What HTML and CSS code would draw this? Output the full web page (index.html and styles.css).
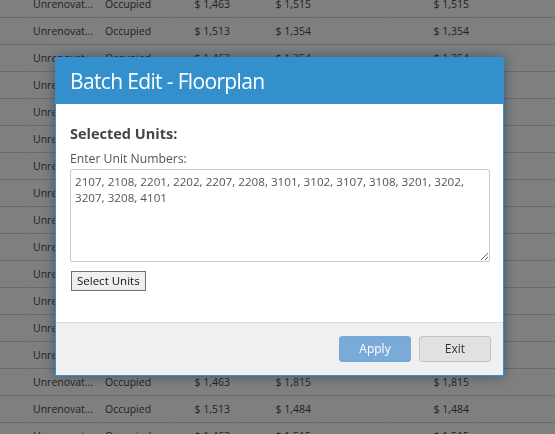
FILE: index.html
```html
<!DOCTYPE html>
<html>
<head>
<meta charset="utf-8">
<link rel="stylesheet" href="styles.css">
</head>
<body>
<div class="page">
  <table class="grid">
    <colgroup>
      <col class="w1"><col class="w2"><col class="w3"><col class="w4"><col class="w5"><col class="w6"><col class="w7"><col class="w8">
    </colgroup>
    <tbody>
      <tr><td></td><td class="name">Unrenovat...</td><td class="st">Occupied</td><td class="num">$ 1,463</td><td class="num">$ 1,515</td><td></td><td class="num">$ 1,515</td><td></td></tr>
      <tr><td></td><td class="name">Unrenovat...</td><td class="st">Occupied</td><td class="num">$ 1,513</td><td class="num">$ 1,354</td><td></td><td class="num">$ 1,354</td><td></td></tr>
      <tr><td></td><td class="name">Unrenovat...</td><td class="st">Occupied</td><td class="num">$ 1,463</td><td class="num">$ 1,354</td><td></td><td class="num">$ 1,354</td><td></td></tr>
      <tr><td></td><td class="name">Unrenovat...</td><td class="st">Occupied</td><td class="num">$ 1,513</td><td class="num">$ 1,515</td><td></td><td class="num">$ 1,515</td><td></td></tr>
      <tr><td></td><td class="name">Unrenovat...</td><td class="st">Occupied</td><td class="num">$ 1,463</td><td class="num">$ 1,484</td><td></td><td class="num">$ 1,484</td><td></td></tr>
      <tr><td></td><td class="name">Unrenovat...</td><td class="st">Occupied</td><td class="num">$ 1,513</td><td class="num">$ 1,815</td><td></td><td class="num">$ 1,815</td><td></td></tr>
      <tr><td></td><td class="name">Unrenovat...</td><td class="st">Occupied</td><td class="num">$ 1,463</td><td class="num">$ 1,354</td><td></td><td class="num">$ 1,354</td><td></td></tr>
      <tr><td></td><td class="name">Unrenovat...</td><td class="st">Occupied</td><td class="num">$ 1,513</td><td class="num">$ 1,515</td><td></td><td class="num">$ 1,515</td><td></td></tr>
      <tr><td></td><td class="name">Unrenovat...</td><td class="st">Occupied</td><td class="num">$ 1,463</td><td class="num">$ 1,484</td><td></td><td class="num">$ 1,484</td><td></td></tr>
      <tr><td></td><td class="name">Unrenovat...</td><td class="st">Occupied</td><td class="num">$ 1,513</td><td class="num">$ 1,815</td><td></td><td class="num">$ 1,815</td><td></td></tr>
      <tr><td></td><td class="name">Unrenovat...</td><td class="st">Occupied</td><td class="num">$ 1,463</td><td class="num">$ 1,354</td><td></td><td class="num">$ 1,354</td><td></td></tr>
      <tr><td></td><td class="name">Unrenovat...</td><td class="st">Occupied</td><td class="num">$ 1,513</td><td class="num">$ 1,515</td><td></td><td class="num">$ 1,515</td><td></td></tr>
      <tr><td></td><td class="name">Unrenovat...</td><td class="st">Occupied</td><td class="num">$ 1,463</td><td class="num">$ 1,484</td><td></td><td class="num">$ 1,484</td><td></td></tr>
      <tr><td></td><td class="name">Unrenovat...</td><td class="st">Occupied</td><td class="num">$ 1,513</td><td class="num">$ 1,354</td><td></td><td class="num">$ 1,354</td><td></td></tr>
      <tr><td></td><td class="name">Unrenovat...</td><td class="st">Occupied</td><td class="num">$ 1,463</td><td class="num">$ 1,815</td><td></td><td class="num">$ 1,815</td><td></td></tr>
      <tr><td></td><td class="name">Unrenovat...</td><td class="st">Occupied</td><td class="num">$ 1,513</td><td class="num">$ 1,484</td><td></td><td class="num">$ 1,484</td><td></td></tr>
      <tr><td></td><td class="name">Unrenovat...</td><td class="st">Occupied</td><td class="num">$ 1,463</td><td class="num">$ 1,515</td><td></td><td class="num">$ 1,515</td><td></td></tr>
    </tbody>
  </table>
</div>
<div class="backdrop"></div>
<div class="modal">
  <div class="modal-header">
    <h1 class="modal-title">Batch Edit - Floorplan</h1>
  </div>
  <div class="modal-body">
    <h2 class="section-title">Selected Units:</h2>
    <label class="field-label" for="units">Enter Unit Numbers:</label>
    <textarea id="units" class="units-input">2107, 2108, 2201, 2202, 2207, 2208, 3101, 3102, 3107, 3108, 3201, 3202, 3207, 3208, 4101</textarea>
    <button class="select-btn" type="button">Select Units</button>
  </div>
  <div class="modal-footer">
    <button class="btn btn-primary" type="button">Apply</button>
    <button class="btn btn-default" type="button">Exit</button>
  </div>
</div>
</body>
</html>
```

FILE: styles.css
```css
html, body {
  margin: 0;
  padding: 0;
  background: #ffffff;
  overflow: hidden;
  font-family: "Open Sans", "Liberation Sans", sans-serif;
}

.page {
  width: 555px;
  height: 434px;
  overflow: hidden;
}

.grid {
  table-layout: fixed;
  width: 563px;
  border-collapse: separate;
  border-spacing: 1px 0;
  margin: -9px 0 0 -1px;
  font-size: 10.5px;
  color: #444444;
}

.w1 { width: 26px; }
.w2 { width: 73px; }
.w3 { width: 71px; }
.w4 { width: 63px; }
.w5 { width: 80px; }
.w6 { width: 70px; }
.w7 { width: 86px; }
.w8 { width: 85px; }

.grid td {
  height: 26px;
  padding: 0;
  border-bottom: 1px solid #d4d4d4;
  white-space: nowrap;
  overflow: hidden;
  vertical-align: middle;
}

.grid td.name { padding-left: 6px; }
.grid td.st { padding-left: 4px; }
.grid td.num { text-align: right; padding-right: 6px; }

.backdrop {
  position: fixed;
  inset: 0;
  background: rgba(0, 0, 0, 0.5);
}

.modal {
  position: fixed;
  left: 55px;
  top: 57px;
  width: 449px;
  box-sizing: border-box;
  border: 1px solid #3a8fc8;
  background: #ffffff;
  box-shadow: 0 0 12px rgba(10, 50, 90, 0.55);
}

.modal-header {
  height: 47px;
  margin-top: -1px;
  padding: 0 14px;
  background: #3390cc;
  box-sizing: border-box;
}

.modal-title {
  margin: 0;
  padding-top: 2px;
  font-size: 21px;
  font-weight: 400;
  line-height: 44px;
  letter-spacing: -0.65px;
  color: #ffffff;
}

.modal-body {
  display: flex;
  flex-direction: column;
  align-items: flex-start;
  padding: 20px 13px 31px 14px;
}

.section-title {
  margin: 0;
  font-size: 14.5px;
  font-weight: 700;
  line-height: 20px;
  color: #444444;
}

.field-label {
  margin-top: 7px;
  font-size: 12.2px;
  line-height: 16px;
  color: #555555;
}

.units-input {
  display: block;
  margin-top: 2px;
  width: 420px;
  height: 93px;
  box-sizing: border-box;
  padding: 4px;
  border: 1px solid #c8c8c8;
  border-radius: 2px;
  font-family: "Open Sans", "Liberation Sans", sans-serif;
  font-size: 11.65px;
  line-height: 16px;
  color: #555555;
  background: #ffffff;
  resize: both;
}

.select-btn {
  margin-top: 9px;
  margin-left: 1px;
  height: 20px;
  padding: 0 5px;
  border: 1px solid #707070;
  border-radius: 0;
  background: #efefef;
  font-family: "Open Sans", "Liberation Sans", sans-serif;
  font-size: 11.5px;
  line-height: 16px;
  color: #111111;
}

.modal-footer {
  display: flex;
  justify-content: flex-end;
  gap: 8px;
  padding: 13px 12px 13px 0;
  border-top: 1px solid #dcdcdc;
  background: #f0f0f0;
}

.btn {
  width: 72px;
  height: 26px;
  box-sizing: border-box;
  border-radius: 3px;
  font-family: "Open Sans", "Liberation Sans", sans-serif;
  font-size: 12px;
  line-height: 16px;
  padding: 0;
}

.btn-primary {
  border: 1px solid #77a8d8;
  background: #7aaad8;
  color: #ffffff;
}

.btn-default {
  border: 1px solid #c4c4c4;
  background: #e1e1e1;
  color: #333333;
}
```
